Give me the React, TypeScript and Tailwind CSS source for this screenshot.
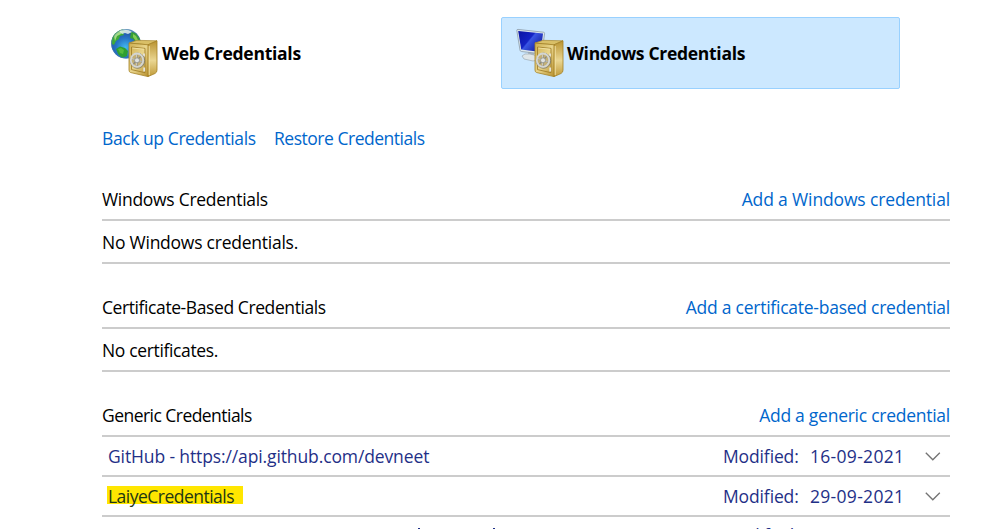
import React from "react";

function Safe({ id }: { id: string }) {
  return (
    <g>
      <defs>
        <linearGradient id={id + "f"} x1="0" y1="0" x2="1" y2="1">
          <stop offset="0" stopColor="#cdae4f" />
          <stop offset=".5" stopColor="#e9d58c" />
          <stop offset="1" stopColor="#b8912e" />
        </linearGradient>
        <linearGradient id={id + "s"} x1="0" y1="0" x2="0" y2="1">
          <stop offset="0" stopColor="#b99330" />
          <stop offset=".55" stopColor="#ead692" />
          <stop offset="1" stopColor="#c09a38" />
        </linearGradient>
      </defs>
      <path d="M19 15 L27 12.3 L47 12.8 L38 16.8 Z" fill="#d9bf67" stroke="#a98a35" strokeWidth=".7" strokeLinejoin="round" />
      <path d="M38 16.8 L47 12.8 V42 Q47 44.5 45 45.5 L38 48.6 Z" fill={`url(#${id}s)`} stroke="#a58124" strokeWidth=".8" strokeLinejoin="round" />
      <path d="M19 15 L38 16.8 V48.6 L20.5 44.5 Q19 44 19 42 Z" fill={`url(#${id}f)`} stroke="#a58124" strokeWidth=".8" strokeLinejoin="round" />
      <path d="M21.5 19 L35 20.4 V44.7 L21.5 41.6 Z" fill="none" stroke="#9c7923" strokeWidth=".8" />
      <path d="M22.3 20 L34.2 21.2" stroke="#f5e7aa" strokeWidth=".8" />
      <path d="M39.2 18 V47" stroke="#f4e5a9" strokeWidth=".9" />
      <path d="M34 25.5 v3 M34.2 39.5 v4" stroke="#e5e4db" strokeWidth="1.8" />
      <ellipse cx="27.5" cy="32.7" rx="7.2" ry="7.6" fill="#c3b077" stroke="#77776c" strokeWidth=".8" />
      <ellipse cx="27" cy="32.2" rx="6.2" ry="6.7" fill="none" stroke="#d3d5d3" strokeWidth="1.8" />
      <path d="M27 27 V38 M22.2 31 L32 34 M23.5 36 L30.5 28.7" stroke="#85867f" strokeWidth="1.1" />
      <path d="M26.6 26.6 V37.6 M21.9 30.7 L31.5 33.5" stroke="#e5e7e4" strokeWidth=".7" />
      <circle cx="27" cy="32.3" r="2.5" fill="#dfe1df" stroke="#85877e" strokeWidth=".7" />
    </g>
  );
}

function WebIcon() {
  return (
    <svg className="size-[50px] shrink-0" viewBox="0 0 50 50" aria-hidden="true">
      <defs>
        <radialGradient id="globe" cx=".48" cy=".62" r=".62">
          <stop offset="0" stopColor="#42b8ef" />
          <stop offset=".5" stopColor="#2775c6" />
          <stop offset=".85" stopColor="#2156a6" />
          <stop offset="1" stopColor="#77a8cc" />
        </radialGradient>
        <clipPath id="globeEdge"><circle cx="16" cy="15.8" r="14.8" /></clipPath>
      </defs>
      <circle cx="16" cy="15.8" r="14.8" fill="url(#globe)" />
      <g clipPath="url(#globeEdge)">
        <path d="M2 8 Q5 2 12 1 L15 3 L13 5 L14 7 L10 8 L9 11 L6 13 L4 17 L2 16 L1 11 Z" fill="#3faa38" />
        <path d="M4 8 Q7 3 12 2 L11 6 L7 8 L5 13 Z" fill="#a2d983" />
        <path d="M6 21 L10 18.5 L15 20 L18 23 L17 28 L12 30 L8 26 Z" fill="#2e9f32" />
        <path d="M8 21 L11 20 L14 22 L13 26 L10 25 Z" fill="#55bb3c" />
        <path d="M21 4 L26 5 L31 12 L29 18 L25 14 L23 11 L20 10 Z" fill="#369e38" />
        <path d="M23 6 L26 8 L28 12 L26 13 L23 9 Z" fill="#82ce56" />
        <path d="M9 3 Q16 -1 22 4 L18 6 L15 5 L12 6 Z" fill="#e5f3ed" opacity=".85" />
      </g>
      <circle cx="16" cy="15.8" r="14.4" fill="none" stroke="#477fa9" strokeWidth=".8" opacity=".6" />
      <Safe id="web" />
    </svg>
  );
}

function WindowsIcon() {
  return (
    <svg className="size-[50px] shrink-0" viewBox="0 0 50 50" aria-hidden="true">
      <defs>
        <linearGradient id="screen" x1="0" y1="0" x2="1" y2=".7">
          <stop offset="0" stopColor="#0b14a1" />
          <stop offset=".48" stopColor="#1423c4" />
          <stop offset=".53" stopColor="#3955e4" />
          <stop offset="1" stopColor="#101b9d" />
        </linearGradient>
      </defs>
      <path d="M12 21 L18 22 L18 27 L12 27 Z" fill="#adb7c0" />
      <path d="M6 28 Q8 25 14 26 L22 28 V32 L17 33 L8 31 Z" fill="#dfe6e9" stroke="#9eabb3" strokeWidth=".7" />
      <path d="M.8 2.5 Q.7 1.3 2 1.4 L27.5 4.2 Q28.8 4.4 28.6 5.7 L26 24 Q25.8 25 24.6 25.8 L5.4 23.5 Q4.2 23.3 4 22.2 Z" fill="#dce7ec" stroke="#8c9ca9" strokeWidth=".8" />
      <path d="M2.2 3 L27 5.6 L24.7 24 L5.2 21.5 Z" fill="url(#screen)" />
      <Safe id="windows" />
    </svg>
  );
}

const Chevron = () => (
  <svg className="ml-[21px] mr-[9px] h-2.5 w-4 shrink-0" viewBox="0 0 16 10" fill="none" aria-hidden="true">
    <path d="M.8 1.7 L7.8 8.8 L14.8 1.7" stroke="#737373" strokeWidth="1.3" />
  </svg>
);

function SectionHeader({ children }: { children: React.ReactNode }) {
  return <div className="flex h-[41px] items-center justify-between border-b-2 border-[#cccccc] pb-px">{children}</div>;
}

function Modified({ date }: { date?: string }) {
  return (
    <>
      <span className="w-[87px] tracking-[-0.13px]">Modified:</span>
      <span className="w-[94px] tracking-[0.3px]">{date}</span>
    </>
  );
}

export default function App() {
  return (
    <main className="h-[529px] w-[985px] overflow-hidden bg-white pl-[102px] pr-[35px] pt-[17px] font-['Open_Sans','Noto_Sans',sans-serif] text-[17.5px] leading-6 whitespace-nowrap text-black">
      <div className="flex h-[72px]">
        <div className="flex w-[399px] items-center pl-2 font-bold">
          <WebIcon />
          <span className="ml-[2px] tracking-[-0.26px]">Web Credentials</span>
        </div>
        <div className="flex w-[399px] items-center rounded-[2px] border border-[#99d1ff] bg-[#cce8ff] pl-[14px] font-bold">
          <WindowsIcon />
          <span className="ml-px tracking-[-0.3px]">Windows Credentials</span>
        </div>
      </div>

      <div className="mt-[37px] flex h-6 text-[#0066cc]">
        <a className="w-[172px] tracking-[-0.42px]">Back up Credentials</a>
        <a className="tracking-[-0.48px]">Restore Credentials</a>
      </div>

      <section className="mt-[30px]">
        <SectionHeader>
          <span className="tracking-[-0.29px]">Windows Credentials</span>
          <a className="tracking-[-0.14px] text-[#0066cc]">Add a Windows credential</a>
        </SectionHeader>
        <div className="flex h-[43px] items-center border-b-2 border-[#cccccc]">
          <span className="tracking-[-0.24px]">No Windows credentials.</span>
        </div>
      </section>

      <section className="mt-6">
        <SectionHeader>
          <span className="tracking-[-0.41px]">Certificate-Based Credentials</span>
          <a className="tracking-[-0.25px] text-[#0066cc]">Add a certificate-based credential</a>
        </SectionHeader>
        <div className="flex h-[43px] items-center border-b-2 border-[#cccccc]">
          <span className="tracking-[-0.35px]">No certificates.</span>
        </div>
      </section>

      <section className="mt-6">
        <SectionHeader>
          <span className="tracking-[-0.54px]">Generic Credentials</span>
          <a className="tracking-[-0.26px] text-[#0066cc]">Add a generic credential</a>
        </SectionHeader>
        <div className="flex h-10 items-center border-b-2 border-[#cccccc] pl-1.5 text-[#1f3087]">
          <span className="mr-auto tracking-[-0.12px]">GitHub - https://api.github.com/devneet</span>
          <Modified date="16-09-2021" />
          <Chevron />
        </div>
        <div className="flex h-10 items-center border-b-2 border-[#cccccc] pl-[5px] text-[#1f3087]">
          <div className="mr-auto flex h-[18px] w-[136px] -translate-y-px items-center bg-[#ffe600] pl-px text-[#1f3713]">
            <span className="translate-y-px tracking-[-0.52px]">LaiyeCredentials</span>
          </div>
          <Modified date="29-09-2021" />
          <Chevron />
        </div>
        <div className="flex h-9 items-center text-[#1f3087]">
          <div className="mr-auto flex h-3.5 gap-[73px] pl-[316px]">
            <span className="h-px w-0.5 bg-[#1f3087]" />
            <span className="h-px w-0.5 bg-[#1f3087]" />
          </div>
          <Modified />
          <span className="w-[46px]" />
        </div>
      </section>
    </main>
  );
}
